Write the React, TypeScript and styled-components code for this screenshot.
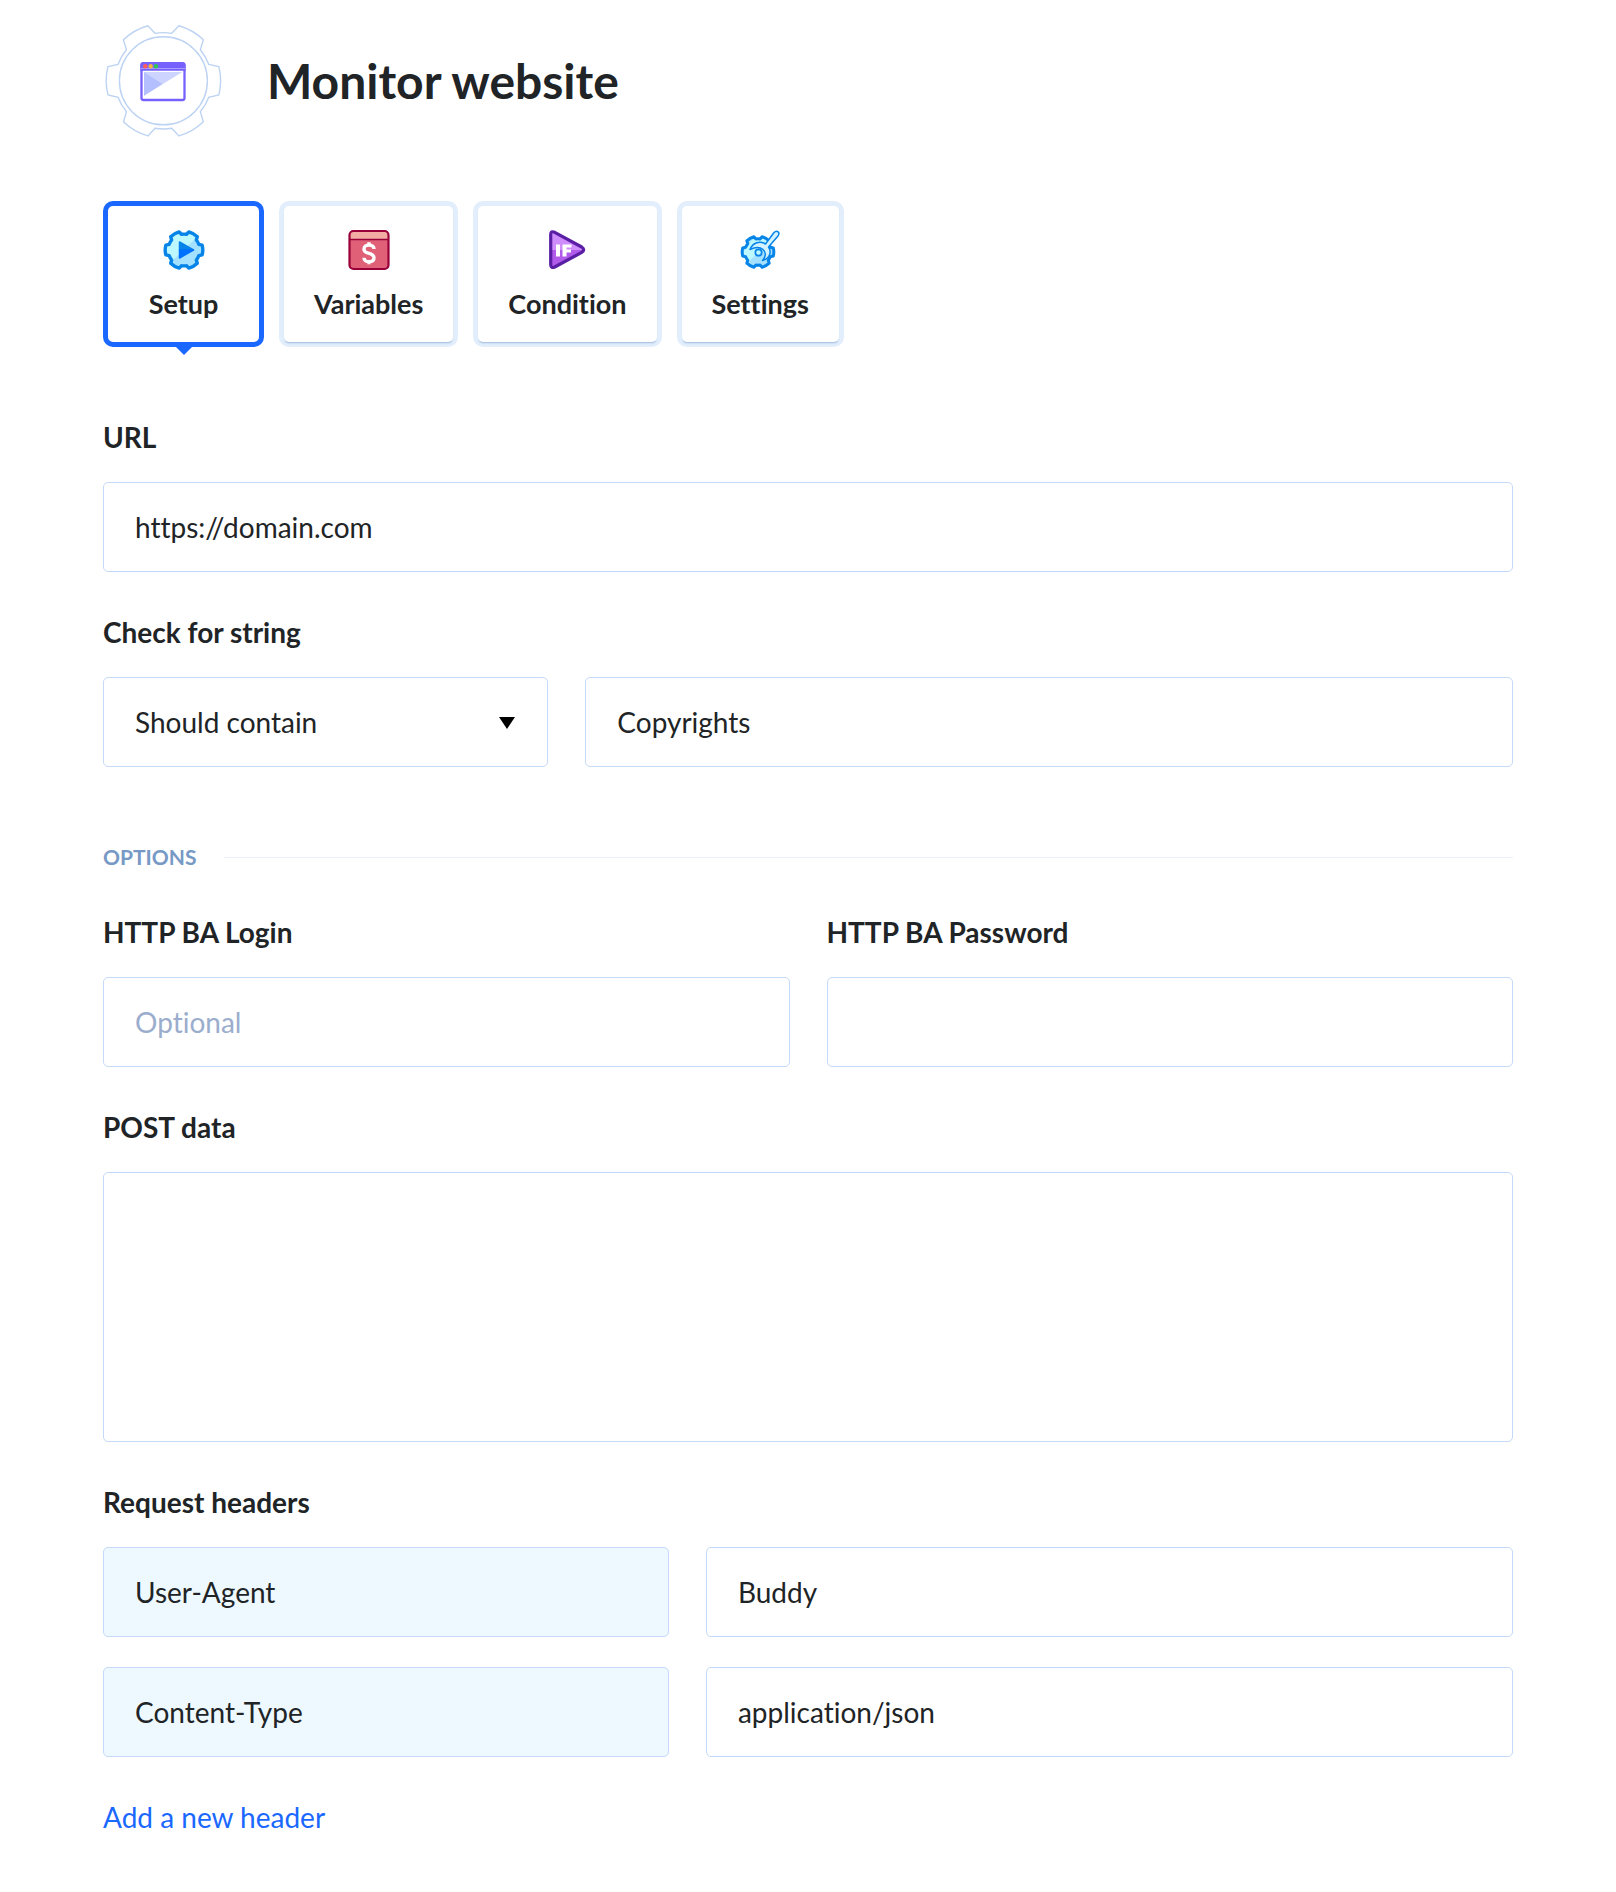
import React, { useState } from "react";
import styled, { createGlobalStyle } from "styled-components";

const GlobalStyle = createGlobalStyle`
  *, *::before, *::after { box-sizing: border-box; }
  body {
    margin: 0;
    background: #fff;
    color: #212426;
    font-family: Lato, "Liberation Sans", sans-serif;
    font-size: 28px;
    line-height: 36px;
    font-variant-ligatures: none;
  }
`;

const Page = styled.main`
  padding: 21px 103px 56px;
`;

const Header = styled.header`
  display: flex;
  align-items: center;
  gap: 43px;
  margin-bottom: 61px;
`;

const Title = styled.h1`
  margin: 0;
  font-size: 48px;
  line-height: 60px;
  font-weight: 700;
`;

const Tabs = styled.nav`
  display: flex;
  gap: 15px;
  margin-bottom: 72px;
`;

const Tab = styled.button<{ $active: boolean }>`
  position: relative;
  display: flex;
  flex-direction: column;
  align-items: center;
  gap: 14px;
  min-width: 161px;
  height: 146px;
  padding: 22px 30px 20px;
  border: 5px solid ${(p) => (p.$active ? "#1a68ff" : "#e2eefb")};
  border-radius: 10px;
  background: #fff;
  color: inherit;
  font: inherit;
  font-size: 27px;
  font-weight: 700;
  font-variant-ligatures: none;
  cursor: pointer;

  &::before {
    content: "";
    position: absolute;
    inset: 0;
    border-radius: 5px;
    box-shadow: ${(p) => (p.$active ? "none" : "0 2px 2px -1px rgba(60, 110, 180, 0.4)")};
  }

  &::after {
    content: "";
    display: ${(p) => (p.$active ? "block" : "none")};
    position: absolute;
    top: 100%;
    left: 50%;
    border: 13px solid transparent;
    border-top-color: #1a68ff;
    border-bottom: 0;
    transform: translateX(-50%);
  }
`;

const TabIcon = styled.svg`
  display: block;
  flex: none;
  width: 44px;
  height: 44px;
`;

const Form = styled.form`
  display: flex;
  flex-direction: column;
  gap: 42px;
`;

const Grid = styled.div`
  display: grid;
  grid-template-columns: repeat(12, minmax(0, 1fr));
  column-gap: 37px;
  row-gap: 30px;
`;

const Group = styled.fieldset`
  margin: 0;
  padding: 0;
  border: 0;
  min-width: 0;
`;

const Cell = styled.div<{ $span: number }>`
  grid-column: span ${(p) => p.$span};
`;

const Label = styled.label`
  display: block;
  margin-bottom: 27px;
  font-weight: 700;
`;

const Legend = styled.legend`
  display: block;
  margin-bottom: 27px;
  padding: 0;
  font-weight: 700;
`;

const Input = styled.input<{ $tinted?: boolean }>`
  display: block;
  width: 100%;
  height: 90px;
  padding: 0 31px;
  border: 1px solid #c5d9f8;
  border-radius: 5px;
  background: ${(p) => (p.$tinted ? "#edf8ff" : "#fff")};
  color: inherit;
  font: inherit;
  font-variant-ligatures: none;

  &::placeholder {
    color: #9badcd;
    opacity: 1;
  }
`;

const TextArea = styled.textarea`
  display: block;
  width: 100%;
  height: 270px;
  padding: 26px 31px;
  border: 1px solid #c5d9f8;
  border-radius: 5px;
  background: #fff;
  color: inherit;
  font: inherit;
  resize: none;
`;

const SelectBox = styled.div`
  display: grid;
  align-items: center;
  > * { grid-area: 1 / 1; }
`;

const Select = styled.select`
  width: 100%;
  height: 90px;
  padding: 0 72px 0 31px;
  border: 1px solid #c5d9f8;
  border-radius: 5px;
  background: #fff;
  color: inherit;
  font: inherit;
  font-variant-ligatures: none;
  appearance: none;
`;

const Caret = styled.svg`
  justify-self: end;
  width: 16px;
  height: 14px;
  margin-right: 33px;
  pointer-events: none;
`;

const Divider = styled.h2`
  display: flex;
  align-items: center;
  gap: 28px;
  margin: 30px 0 -3px;
  color: #7799c5;
  font-size: 21px;
  line-height: 36px;
  font-weight: 700;

  &::after {
    content: "";
    flex: 1;
    height: 1px;
    background: #e6f1fb;
  }
`;

const Link = styled.a`
  align-self: flex-start;
  color: #1a68ff;
  text-decoration: none;
`;

function gearPath(c: number, outer: number, inner: number, tipHalf: number, rootHalf: number) {
  const at = (r: number, deg: number) => {
    const a = (deg * Math.PI) / 180;
    return `${(c + r * Math.cos(a)).toFixed(2)} ${(c + r * Math.sin(a)).toFixed(2)}`;
  };
  let d = "";
  for (let i = 0; i < 6; i++) {
    const m = i * 60;
    d += `${i ? `A${inner} ${inner} 0 0 1 ` : "M"}${at(inner, m - rootHalf)}`;
    d += `L${at(outer, m - tipHalf)}A${outer} ${outer} 0 0 1 ${at(outer, m + tipHalf)}L${at(inner, m + rootHalf)}`;
  }
  return `${d}A${inner} ${inner} 0 0 1 ${at(inner, -rootHalf)}Z`;
}

const HeaderIcon = () => (
  <svg width="121" height="119" viewBox="0 0 121 119" aria-hidden="true">
    <g transform="translate(0.4 -0.2)" fill="none" stroke="#bdd3f3" strokeWidth="1.4">
      <path d={gearPath(60, 57.2, 48.2, 14.3, 20)} />
      <circle cx="60" cy="60" r="44" />
    </g>
    <rect x="38.500" y="42.500" width="43" height="36.500" rx="2" fill="#fff" stroke="#7661fc" strokeWidth="2.300" />
    <path d="M37.300 49.700V44q0-3 3-3h39.200q3 0 3 3v5.700z" fill="#7661fc" />
    <path d="M37.300 47.500h45.200" stroke="#a79cff" strokeWidth="1" />
    <path d="M41 51h38.300L41 74.700z" fill="#ccd4ff" />
    <path d="M41 51l18.300 12L41 74.700z" fill="#b3bfff" />
    <circle cx="42.300" cy="45.300" r="2.200" fill="#ff5b5b" />
    <circle cx="47.700" cy="45.300" r="2.200" fill="#f7b53c" />
    <circle cx="53" cy="45.300" r="2.200" fill="#2fc558" />
  </svg>
);

const SetupIcon = () => (
  <TabIcon viewBox="0 0 44 44" aria-hidden="true">
    <path d={gearPath(22, 18.8, 15.9, 15, 21)} fill="#a4e0ff" />
    <path d="M9 34L34 10l-5-4-4 2h-6l-4-2-6 4v4l-3 4-3 1v7l4 2z" fill="#bdf8ff" />
    <path d={gearPath(22, 18.8, 15.9, 15, 21)} fill="none" stroke="#0784e8" strokeWidth="3.400" strokeLinejoin="round" />
    <path d="M17.500 14l14 8h-14z" fill="#0784e8" stroke="#0784e8" strokeWidth="1.500" strokeLinejoin="round" />
    <path d="M17.500 30l14-8h-14z" fill="#0070ff" stroke="#0070ff" strokeWidth="1.500" strokeLinejoin="round" />
  </TabIcon>
);

const VariablesIcon = () => (
  <TabIcon viewBox="0 0 44 44" aria-hidden="true">
    <rect x="2.500" y="3" width="39" height="38" rx="4" fill="#df6077" />
    <path d="M2.500 11V7q0-4 4-4h31q4 0 4 4v4z" fill="#f3aca4" />
    <path d="M2.500 11.500h39" stroke="#99003a" strokeWidth="1.500" />
    <rect x="2.500" y="3" width="39" height="38" rx="4" fill="none" stroke="#99003a" strokeWidth="2.200" />
    <path d="M22 14.300v3M22 33v3.200M27 21c0-2.600-2-3.900-5-3.900s-5 1.400-5 4.100 2.200 3.400 5 4.200 5 1.800 5 4.400-2 4-5 4-5-1.400-5-4" fill="none" stroke="#fff" strokeWidth="3.400" />
  </TabIcon>
);

const ConditionIcon = () => (
  <TabIcon viewBox="0 0 44 44" aria-hidden="true">
    <path d="M6 6q0-4 4-2l27 15q2 1 2 3H6z" fill="#cf8dfc" />
    <path d="M6 38q0 4 4 2l27-15q2-1 2-3H6z" fill="#b05bea" />
    <path d="M5.700 6.500q0-4 4-2.200l27 14.700q4 2.700 0 5.400L9.700 39q-4 1.700-4-2.500z" fill="none" stroke="#5a1fa5" strokeWidth="3.200" strokeLinejoin="round" />
    <path d="M11 16.500h4v12h-4zM17.500 16.500h9v3h-5v2h4.500v3h-4.500v4h-4z" fill="#fff" />
  </TabIcon>
);

const SettingsIcon = () => (
  <TabIcon viewBox="0 0 44 44" aria-hidden="true">
    <path d={gearPath(20, 15.8, 13.2, 15, 21)} transform="translate(0 4)" fill="#a4e0ff" />
    <path d="M9 35L32 14l-6-3H15l-7 8-3 6z" fill="#bdf8ff" />
    <path d={gearPath(20, 15.8, 13.2, 15, 21)} transform="translate(0 4)" fill="none" stroke="#0784e8" strokeWidth="3" strokeLinejoin="round" />
    <path d="M12 21.500c3-7 10-9 15.500-5.500l8.500-11.500c3-3 6.500 0 4 3.500L30.500 19c3.500 5 1 12-6 13.500 3.500-4 4-8 .5-11-3.500-3-8-2.500-13 0z" fill="#d2f3ff" stroke="#0784e8" strokeWidth="1.500" strokeLinejoin="round" />
    <circle cx="20.500" cy="24.500" r="3.200" fill="#bdf8ff" stroke="#0784e8" strokeWidth="1.700" />
  </TabIcon>
);

const tabs = [
  { name: "Setup", Icon: SetupIcon },
  { name: "Variables", Icon: VariablesIcon },
  { name: "Condition", Icon: ConditionIcon },
  { name: "Settings", Icon: SettingsIcon },
];

const requestHeaders = [
  { name: "User-Agent", value: "Buddy" },
  { name: "Content-Type", value: "application/json" },
];

export default function App() {
  const [active, setActive] = useState("Setup");

  return (
    <Page>
      <GlobalStyle />
      <Header>
        <HeaderIcon />
        <Title>Monitor website</Title>
      </Header>

      <Tabs>
        {tabs.map(({ name, Icon }) => (
          <Tab key={name} type="button" $active={name === active} onClick={() => setActive(name)}>
            <Icon />
            {name}
          </Tab>
        ))}
      </Tabs>

      <Form onSubmit={(e) => e.preventDefault()}>
        <div>
          <Label htmlFor="url">URL</Label>
          <Input id="url" defaultValue="https://domain.com" />
        </div>

        <div>
          <Label htmlFor="match">Check for string</Label>
          <Grid>
            <Cell $span={4}>
              <SelectBox>
                <Select id="match">
                  <option>Should contain</option>
                </Select>
                <Caret viewBox="0 0 16 14" aria-hidden="true">
                  <path d="M0 2h16L8 14z" />
                </Caret>
              </SelectBox>
            </Cell>
            <Cell $span={8}>
              <Input aria-label="String" defaultValue="Copyrights" />
            </Cell>
          </Grid>
        </div>

        <Divider>OPTIONS</Divider>

        <Grid>
          <Cell $span={6}>
            <Label htmlFor="login">HTTP BA Login</Label>
            <Input id="login" placeholder="Optional" />
          </Cell>
          <Cell $span={6}>
            <Label htmlFor="password">HTTP BA Password</Label>
            <Input id="password" type="password" />
          </Cell>
        </Grid>

        <div>
          <Label htmlFor="post-data">POST data</Label>
          <TextArea id="post-data" />
        </div>

        <Group>
          <Legend>Request headers</Legend>
          <Grid>
            {requestHeaders.map(({ name, value }) => (
              <React.Fragment key={name}>
                <Cell $span={5}>
                  <Input $tinted aria-label="Header name" defaultValue={name} />
                </Cell>
                <Cell $span={7}>
                  <Input aria-label={`${name} value`} defaultValue={value} />
                </Cell>
              </React.Fragment>
            ))}
          </Grid>
        </Group>

        <Link href="#new-header">Add a new header</Link>
      </Form>
    </Page>
  );
}
